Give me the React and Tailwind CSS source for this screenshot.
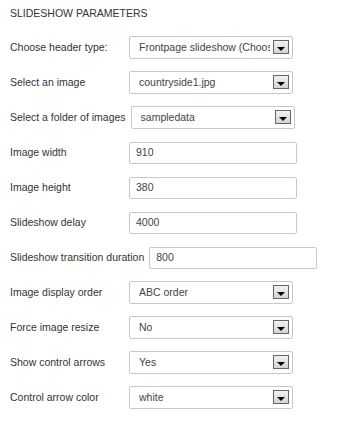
const rows = [
  { label: 'Choose header type:', type: 'select', value: 'Frontpage slideshow (Choose' },
  { label: 'Select an image', type: 'select', value: 'countryside1.jpg' },
  { label: 'Select a folder of images', type: 'select', value: 'sampledata' },
  { label: 'Image width', type: 'input', value: '910' },
  { label: 'Image height', type: 'input', value: '380' },
  { label: 'Slideshow delay', type: 'input', value: '4000' },
  { label: 'Slideshow transition duration', type: 'input', value: '800' },
  { label: 'Image display order', type: 'select', value: 'ABC order' },
  { label: 'Force image resize', type: 'select', value: 'No' },
  { label: 'Show control arrows', type: 'select', value: 'Yes' },
  { label: 'Control arrow color', type: 'select', value: 'white' },
]

function FakeSelect({ value }) {
  return (
    <div className="relative flex h-[23px] w-[164px] items-center rounded-[2px] border border-[#c8c8c8] bg-white pl-[9px] pr-[22px]">
      <span className="overflow-hidden whitespace-nowrap text-[10.5px] text-[#444]">{value}</span>
      <span className="absolute right-[3px] top-[3px] flex h-[14px] w-[16px] items-end justify-center border border-[#666] bg-gradient-to-b from-[#f2f2f2] to-[#d4d4d4] pb-[2px]">
        <span className="h-0 w-0 border-x-[4px] border-t-[4px] border-x-transparent border-t-black" />
      </span>
    </div>
  )
}

function FakeInput({ value }) {
  return (
    <div className="flex h-[22px] w-[168px] items-center rounded-[2px] border border-[#c8c8c8] bg-white pl-[6px]">
      <span className="text-[10.5px] text-[#444]">{value}</span>
    </div>
  )
}

export default function App() {
  return (
    <div className="min-h-[425px] bg-white px-[10px] pt-[7px] font-['Liberation_Sans',Arial,sans-serif] text-[#333]">
      <div className="text-[10.5px] leading-[13px] uppercase">Slideshow parameters</div>
      <div className="mt-[10px] flex flex-col">
        {rows.map((r) => (
          <div key={r.label} className="flex h-[35px] items-center">
            <span className="mr-[5px] min-w-[114px] whitespace-nowrap text-[10.5px] leading-[13px]">{r.label}</span>
            {r.type === 'select' ? <FakeSelect value={r.value} /> : <FakeInput value={r.value} />}
          </div>
        ))}
      </div>
    </div>
  )
}
